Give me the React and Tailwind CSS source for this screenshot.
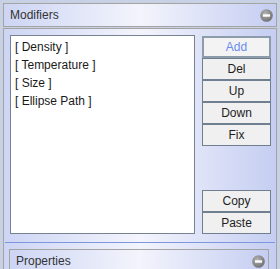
const grad = 'bg-[linear-gradient(to_right,#cdd5f4,#f3f4fc_50%,#c5cef2)]';

const MinusIcon = () => (
    <svg width="13" height="13" viewBox="0 0 13 13">
        <defs>
            <radialGradient id="mg" cx="40%" cy="35%" r="70%">
                <stop offset="0%" stopColor="#b4b4b4" />
                <stop offset="100%" stopColor="#6e6e6e" />
            </radialGradient>
        </defs>
        <circle cx="6.5" cy="6.5" r="6.3" fill="url(#mg)" />
        <rect x="3" y="5.3" width="7" height="2.4" fill="#ffffff" />
    </svg>
);

const Btn = ({ label, active }) => (
    <div
        className={
            active
                ? 'h-[22px] flex items-center justify-center border-2 border-[#8c9cab] bg-[#f3f3f3] text-[#6a8cf2]'
                : 'h-[22px] flex items-center justify-center border border-[#6f7f8f] bg-[#f0f0f0] text-[#1e1e1e]'
        }
    >
        {label}
    </div>
);

export default function App() {
    const items = ['[ Density ]', '[ Temperature ]', '[ Size ]', '[ Ellipse Path ]'];

    return (
        <div
            className="w-[280px] h-[269px] bg-[#c8d0e4] overflow-hidden pt-[3px] px-[3px] text-[12px]"
            style={{ fontFamily: '"Liberation Sans", Arial, sans-serif' }}
        >
            <div className={`h-[24px] border border-[#a4a4a4] ${grad} flex items-center justify-between pl-[6px] pr-[3px] text-[#333] text-[12px]`}>
                <span>Modifiers</span>
                <MinusIcon />
            </div>

            <div className={`mt-px h-[245px] border-x border-t border-[#a4a4a4] ${grad} pt-[6px]`}>
                <div className="flex pl-[6px]">
                    <div className="w-[185px] h-[199px] bg-white border border-[#76828f] pl-[4px] pt-[2px] text-[12px] text-[#1a1a1a]">
                        {items.map((it) => (
                            <div key={it} className="h-[18px] leading-[18px]">{it}</div>
                        ))}
                    </div>
                    <div className="ml-[7px] w-[69px] pt-px flex flex-col">
                        <Btn label="Add" active />
                        <Btn label="Del" />
                        <Btn label="Up" />
                        <Btn label="Down" />
                        <Btn label="Fix" />
                        <div className="flex-1" />
                        <Btn label="Copy" />
                        <Btn label="Paste" />
                    </div>
                </div>

                <div className="mt-[8px] mx-px h-px bg-[#7d97de]" />

                <div className={`mt-[6px] ml-[5px] mr-[7px] h-[24px] border border-[#a4a4a4] ${grad} flex items-center justify-between pl-[6px] pr-[3px] text-[#333] text-[12px]`}>
                    <span>Properties</span>
                    <MinusIcon />
                </div>
            </div>
        </div>
    );
}
